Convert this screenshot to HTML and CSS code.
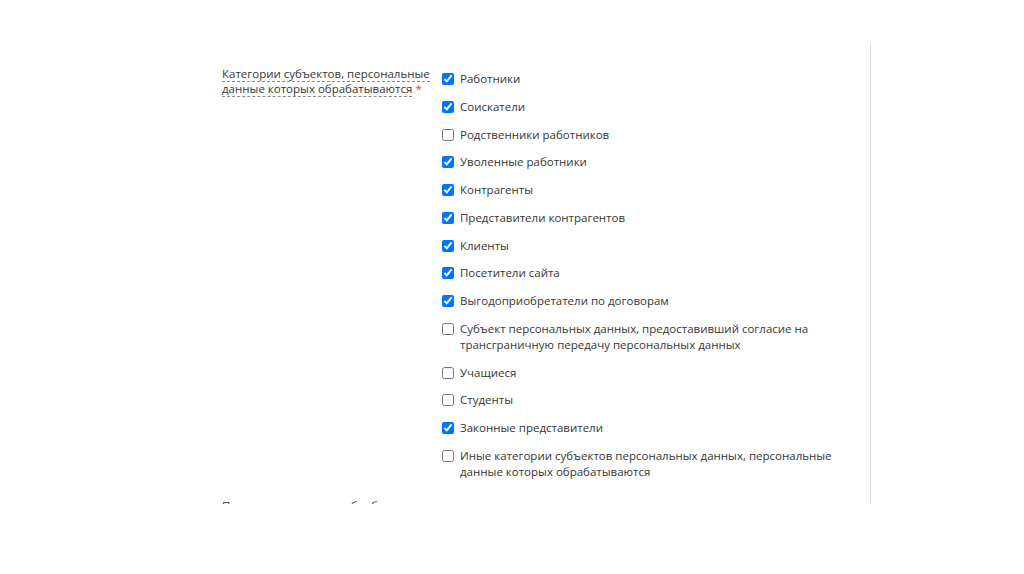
FILE: index.html
```html
<!DOCTYPE html>
<html lang="ru">
<head>
<meta charset="utf-8">
<link rel="stylesheet" href="styles.css">
</head>
<body>
<div class="panel">
  <div class="form-row">
    <div class="label"><span class="hint">Категории субъектов, персональные данные которых обрабатываются</span> <span class="req">*</span></div>
    <div class="options">
      <label class="opt"><input type="checkbox" checked><span>Работники</span></label>
      <label class="opt"><input type="checkbox" checked><span>Соискатели</span></label>
      <label class="opt"><input type="checkbox"><span>Родственники работников</span></label>
      <label class="opt"><input type="checkbox" checked><span>Уволенные работники</span></label>
      <label class="opt"><input type="checkbox" checked><span>Контрагенты</span></label>
      <label class="opt"><input type="checkbox" checked><span>Представители контрагентов</span></label>
      <label class="opt"><input type="checkbox" checked><span>Клиенты</span></label>
      <label class="opt"><input type="checkbox" checked><span>Посетители сайта</span></label>
      <label class="opt"><input type="checkbox" checked><span>Выгодоприобретатели по договорам</span></label>
      <label class="opt"><input type="checkbox"><span>Субъект персональных данных, предоставивший согласие на трансграничную передачу персональных данных</span></label>
      <label class="opt"><input type="checkbox"><span>Учащиеся</span></label>
      <label class="opt"><input type="checkbox"><span>Студенты</span></label>
      <label class="opt"><input type="checkbox" checked><span>Законные представители</span></label>
      <label class="opt"><input type="checkbox"><span>Иные категории субъектов персональных данных, персональные данные которых обрабатываются</span></label>
    </div>
  </div>
  <div class="form-row">
    <div class="label"><span class="hint">Правовое основание обработки персональных данных</span></div>
    <div class="options"></div>
  </div>
</div>
</body>
</html>
```

FILE: styles.css
```css
html, body {
  margin: 0;
  padding: 0;
  background: #ffffff;
}
body {
  font-family: "Open Sans", "Noto Sans", sans-serif;
  font-size: 11.5px;
  color: #363636;
}
.panel {
  margin-top: 44px;
  width: 871px;
  height: 460px;
  overflow: hidden;
  border-right: 1px solid #dcdcdc;
  box-sizing: border-box;
}
.form-row {
  display: flex;
  padding-left: 222px;
  padding-top: 22px;
}
.form-row + .form-row {
  padding-top: 18px;
}
.label {
  width: 214px;
  flex: none;
  line-height: 15px;
}
.hint {
  border-bottom: 1px dashed #8a8a8a;
}
.req {
  color: #e53935;
}
.options {
  display: flex;
  flex-direction: column;
  gap: 11.75px;
  padding-top: 5px;
  padding-left: 3px;
  width: 398px;
}
.opt {
  display: flex;
  align-items: flex-start;
  line-height: 16px;
}
.opt input {
  flex: none;
  width: 12px;
  height: 12px;
  margin: 2px 6px 0 3px;
}
```
